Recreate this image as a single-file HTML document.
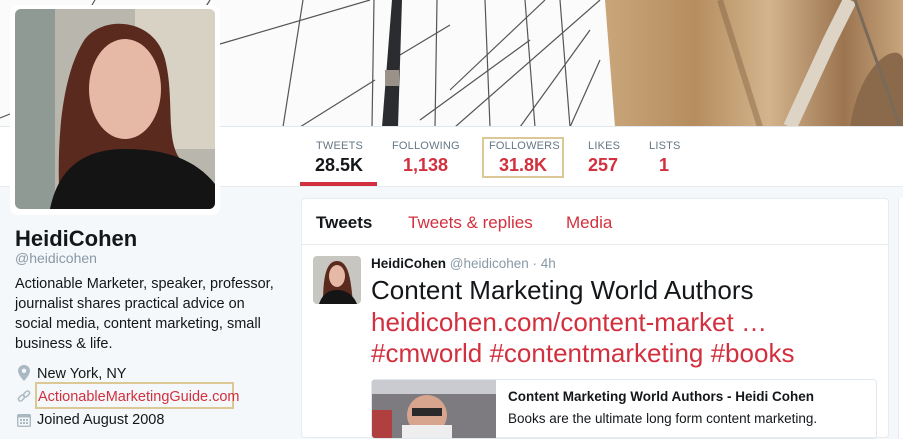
<!DOCTYPE html>
<html><head><meta charset="utf-8"><style>
*{margin:0;padding:0;box-sizing:border-box}
body{width:903px;height:434px;overflow:hidden;background:#f5f8fa;font-family:"Liberation Sans",Arial,sans-serif;position:relative;color:#14171a}
.a{position:absolute;white-space:nowrap}
.red{color:#d2303f}
.lab{font-size:11px;color:#657786;letter-spacing:.2px}
.num{font-size:18px;font-weight:bold}
</style></head><body>
<!-- header -->
<svg class="a" style="left:0;top:0" width="903" height="127" viewBox="0 0 903 127">
<defs><linearGradient id="st" x1="0" x2="1" y1="0" y2="0">
<stop offset="0" stop-color="#c9a67a"/><stop offset=".3" stop-color="#b58d5f"/><stop offset=".55" stop-color="#d3b48c"/><stop offset=".8" stop-color="#9c7550"/><stop offset="1" stop-color="#c8a57d"/></linearGradient></defs>
<rect width="903" height="127" fill="#fbfbfb"/>
<g stroke="#555" stroke-width="1.2" fill="none">
<path d="M220 44 L370 0"/><path d="M300 127 L375 80"/><path d="M0 118 L10 114"/>
<path d="M283 127 L303 0"/><path d="M372 127 L374 0"/><path d="M435 127 L437 0"/>
<path d="M400 55 L450 25"/><path d="M420 120 L530 40"/><path d="M450 90 L545 0"/>
<path d="M485 0 L490 127"/><path d="M525 0 L535 127"/><path d="M560 0 L570 127"/>
<path d="M455 127 L600 0"/><path d="M520 127 L590 30"/><path d="M570 127 L600 60"/>
<path d="M95 0 L92 5"/><path d="M210 0 L205 8"/>
</g>
<path d="M392 0 L402 0 L398 127 L382 127 Z" fill="#2a2c30"/>
<rect x="385" y="70" width="14" height="16" fill="#9a9288"/>
<path d="M605 0 L903 0 L903 127 L615 127 Z" fill="url(#st)"/>
<path d="M720 0 L760 127" stroke="#7a5a3c" stroke-width="6" opacity=".4"/>
<path d="M790 127 L830 40 L850 0" stroke="#ddd4c5" stroke-width="14" fill="none"/>
<path d="M850 127 C860 60 900 40 903 60 L903 127 Z" fill="#8a6a4a"/>
<path d="M855 0 L900 127" stroke="#7a6a5a" stroke-width="3"/>
</svg>
<div class="a" style="left:0;top:126px;width:903px;height:61px;background:#fff;border-top:1px solid #e1e8ed;border-bottom:1px solid #e6ecf0"></div>
<!-- avatar -->
<div class="a" style="left:10px;top:5px;width:210px;height:210px;background:#fff;border-radius:8px"></div>
<svg class="a" style="left:15px;top:9px;border-radius:6px" width="200" height="200" viewBox="0 0 200 200">
<rect width="200" height="200" fill="#b9b7ad"/><rect x="120" y="0" width="80" height="140" fill="#d8d2c4"/><rect width="40" height="200" fill="#8f9a95"/>
<path d="M45 200 C40 120 50 60 70 30 C90 5 140 10 150 50 C160 90 150 130 165 150 L190 200 Z" fill="#5a2a1e"/>
<ellipse cx="110" cy="80" rx="36" ry="50" fill="#e6b9a6"/>
<path d="M35 200 C45 150 80 140 110 140 C150 140 180 150 200 175 L200 200 Z" fill="#141414"/>
</svg>
<!-- stats -->
<div class="a lab" style="left:316px;top:140px">TWEETS</div><div class="a num" style="left:315px;top:155px">28.5K</div>
<div class="a" style="left:300px;top:182px;width:77px;height:4px;background:#d2303f"></div>
<div class="a lab" style="left:392px;top:140px">FOLLOWING</div><div class="a num red" style="left:403px;top:155px">1,138</div>
<div class="a" style="left:482px;top:137px;width:82px;height:41px;border:2px solid #dcc894"></div>
<div class="a lab" style="left:489px;top:140px">FOLLOWERS</div><div class="a num red" style="left:499px;top:155px">31.8K</div>
<div class="a lab" style="left:588px;top:140px">LIKES</div><div class="a num red" style="left:588px;top:155px">257</div>
<div class="a lab" style="left:649px;top:140px">LISTS</div><div class="a num red" style="left:659px;top:155px">1</div>
<!-- profile -->
<div class="a" style="left:15px;top:226px;font-size:22px;font-weight:bold">HeidiCohen</div>
<div class="a" style="left:15px;top:250px;font-size:14px;color:#8899a6">@heidicohen</div>
<div class="a" style="left:15px;top:274px;font-size:14.5px;line-height:20px;color:#14171a">Actionable Marketer, speaker, professor,<br>journalist shares practical advice on<br>social media, content marketing, small<br>business &amp; life.</div>
<svg class="a" style="left:18px;top:365px" width="12" height="16" viewBox="0 0 12 16"><path d="M6 0C2.7 0 0 2.6 0 5.8 0 10 6 16 6 16s6-6 6-10.2C12 2.6 9.3 0 6 0z" fill="#aab8c2"/><circle cx="6" cy="5.8" r="2.2" fill="#f5f8fa"/></svg>
<div class="a" style="left:37px;top:366px;font-size:14.5px">New York, NY</div>
<svg class="a" style="left:17px;top:390px" width="14" height="14" viewBox="0 0 14 14"><g fill="none" stroke="#aab8c2" stroke-width="1.5"><rect x="1" y="6" width="7" height="4" rx="2" transform="rotate(-45 4.5 8)"/><rect x="6" y="2" width="7" height="4" rx="2" transform="rotate(-45 9.5 4)"/></g></svg>
<div class="a" style="left:35px;top:382px;width:199px;height:27px;border:2px solid #dcc894"></div>
<div class="a red" style="left:38px;top:389px;font-size:14.5px">ActionableMarketingGuide.com</div>
<svg class="a" style="left:17px;top:413px" width="14" height="14" viewBox="0 0 14 14"><rect x="0.7" y="1.7" width="12.6" height="11.6" rx="1" fill="none" stroke="#aab8c2" stroke-width="1.4"/><rect x="1" y="2" width="12" height="2.5" fill="#aab8c2"/><g fill="#aab8c2"><rect x="3" y="6" width="2" height="2"/><rect x="6" y="6" width="2" height="2"/><rect x="9" y="6" width="2" height="2"/><rect x="3" y="9" width="2" height="2"/><rect x="6" y="9" width="2" height="2"/><rect x="9" y="9" width="2" height="2"/></g></svg>
<div class="a" style="left:37px;top:412px;font-size:14.5px">Joined August 2008</div>
<!-- main card -->
<div class="a" style="left:301px;top:198px;width:588px;height:240px;background:#fff;border:1px solid #e6ecf0;border-radius:4px"></div>
<div class="a" style="left:301px;top:244px;width:588px;height:1px;background:#e6ecf0"></div>
<div class="a" style="left:898px;top:198px;width:5px;height:240px;background:#fff;border-left:1px solid #e6ecf0"></div>
<div class="a" style="left:316px;top:213px;font-size:17px;font-weight:bold">Tweets</div>
<div class="a red" style="left:408px;top:213px;font-size:17px">Tweets &amp; replies</div>
<div class="a red" style="left:566px;top:213px;font-size:17px">Media</div>
<svg class="a" style="left:313px;top:256px;border-radius:4px" width="48" height="48" viewBox="0 0 48 48"><rect width="48" height="48" fill="#c8c6c0"/><path d="M10 48 C10 25 12 5 24 5 C36 5 38 25 40 48Z" fill="#5a2a1e"/><ellipse cx="24" cy="20" rx="8" ry="11" fill="#e6b9a6"/><path d="M6 48 C10 36 18 34 24 34 C32 34 40 38 44 48Z" fill="#151515"/></svg>
<div class="a" style="left:371px;top:256px;font-size:13.5px"><b>HeidiCohen</b> <span style="color:#8899a6">@heidicohen · 4h</span></div>
<div class="a" style="left:371px;top:275px;font-size:26px;color:#14171a">Content Marketing World Authors</div>
<div class="a red" style="left:371px;top:307px;font-size:26px">heidicohen.com/content-market …</div>
<div class="a red" style="left:371px;top:338px;font-size:26px">#cmworld #contentmarketing #books</div>
<div class="a" style="left:371px;top:379px;width:506px;height:60px;border:1px solid #e1e8ed;border-radius:4px;overflow:hidden">
<svg width="124" height="60" viewBox="0 0 124 60" style="position:absolute;left:0;top:0"><rect width="124" height="60" fill="#7d7a80"/><rect y="0" width="124" height="14" fill="#c9cbd0"/><circle cx="55" cy="35" r="20" fill="#d7a58e"/><rect x="40" y="28" width="30" height="8" fill="#2a2a2a"/><rect x="30" y="45" width="50" height="15" fill="#eee"/><rect x="0" y="30" width="20" height="30" fill="#b04040"/></svg>
</div>
<div class="a" style="left:508px;top:389px;font-size:13.5px;font-weight:bold">Content Marketing World Authors - Heidi Cohen</div>
<div class="a" style="left:508px;top:411px;font-size:13.5px">Books are the ultimate long form content marketing.</div>
</body></html>
